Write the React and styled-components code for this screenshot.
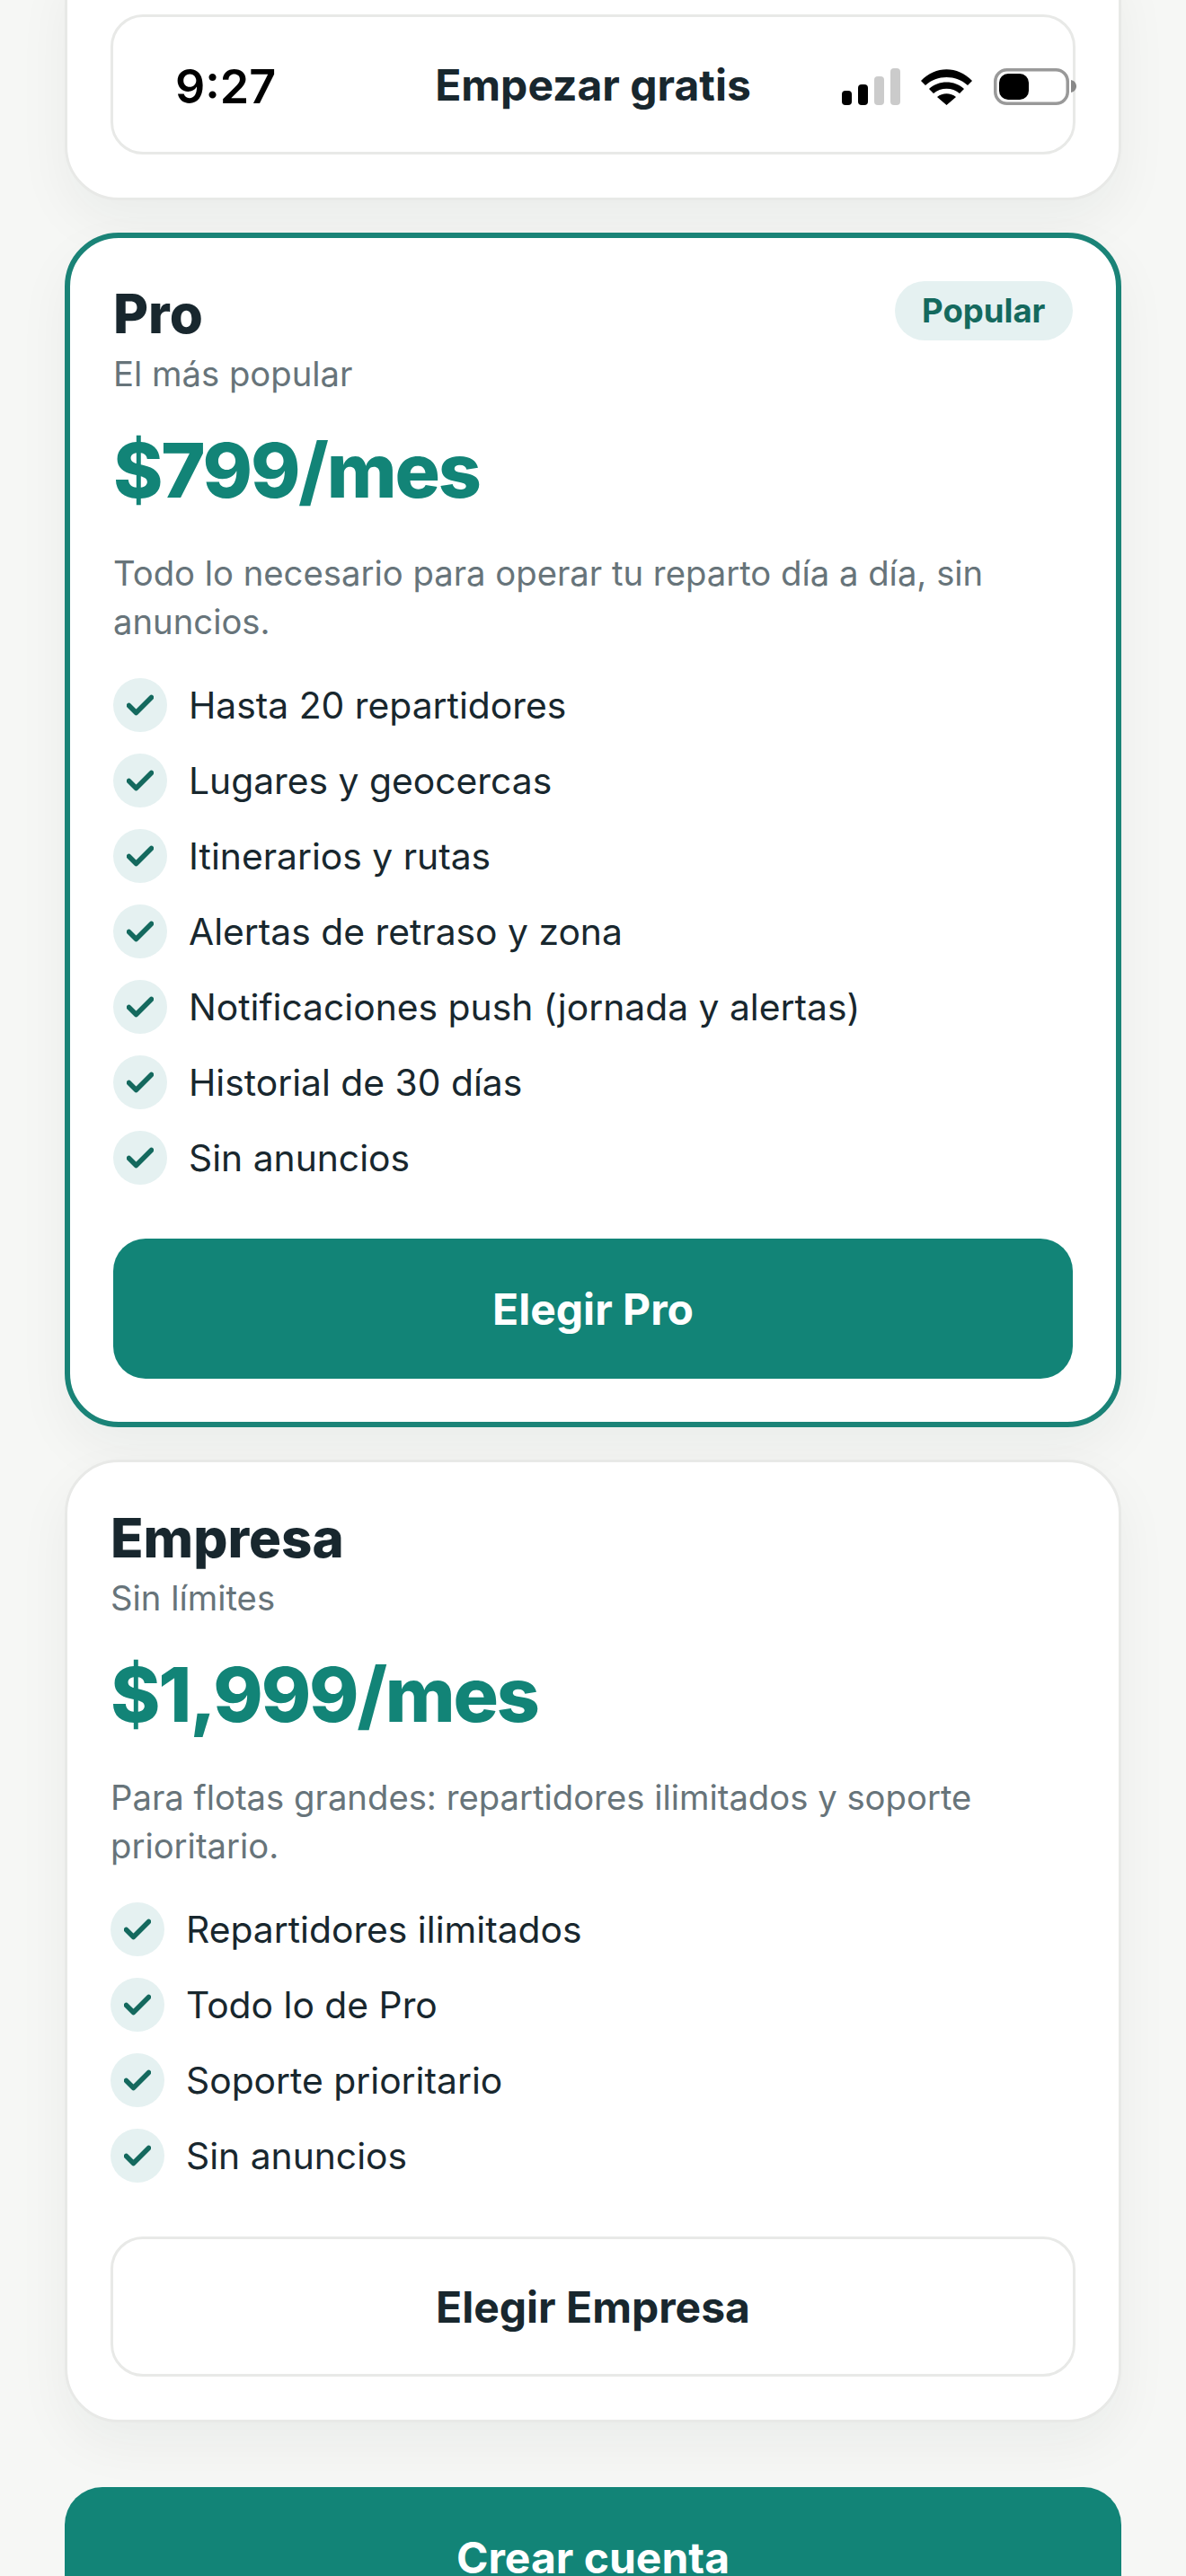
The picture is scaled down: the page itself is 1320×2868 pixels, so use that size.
import React from "react";
import styled, { createGlobalStyle } from "styled-components";

const Global = createGlobalStyle`
  html, body { margin: 0; padding: 0; background: #f6f7f5; }
  * { box-sizing: border-box; }
  #root { font-family: Inter, "Liberation Sans", sans-serif; }
`;

const Page = styled.div`
  position: relative;
  width: 1320px;
  height: 2868px;
  overflow: hidden;
  padding: 0 72px;
  display: flex;
  flex-direction: column;
  gap: 36px;
`;

const Card = styled.section`
  background: #fff;
  border: ${(p) => (p.$featured ? "6px solid #1a8377" : "3px solid #e8e9e7")};
  border-radius: 60px;
  padding: 48px;
  display: flex;
  flex-direction: column;
  box-shadow: 0 24px 60px rgba(24, 44, 44, 0.05);
`;

const CroppedCard = styled(Card)`
  margin-top: -60px;
  padding-top: 73px;
`;

const HeadRow = styled.div`
  display: flex;
  justify-content: space-between;
  align-items: flex-start;
`;

const PlanName = styled.h2`
  margin: 0;
  font-size: 60px;
  line-height: 72px;
  font-weight: 800;
  color: #18272e;
`;

const Sub = styled.div`
  margin-top: 7px;
  font-size: 38.25px;
  line-height: 48px;
  color: #67747a;
`;

const Pill = styled.span`
  height: 66px;
  padding: 0 30.5px;
  border-radius: 33px;
  background: #e5f1f1;
  color: #14695e;
  font-size: 36.5px;
  font-weight: 700;
  display: flex;
  align-items: center;
`;

const Price = styled.div`
  margin-top: 33px;
  font-size: 84px;
  line-height: 102px;
  font-weight: 800;
  letter-spacing: -2.2px;
  color: #128477;
`;

const Desc = styled.p`
  margin: 36px 0 0;
  font-size: 38.25px;
  line-height: 54px;
  color: #67747a;
`;

const Features = styled.ul`
  list-style: none;
  margin: 36px 0 0;
  padding: 0;
  display: flex;
  flex-direction: column;
  gap: 24px;
`;

const Feature = styled.li`
  display: flex;
  align-items: center;
  gap: 24px;
  height: 60px;
  font-size: 40.8px;
  color: #18272e;
`;

const CheckDot = styled.span`
  width: 60px;
  height: 60px;
  flex: none;
  border-radius: 50%;
  background: #e5f1f1;
  display: flex;
  align-items: center;
  justify-content: center;
`;

const Button = styled.button`
  width: 100%;
  height: 156px;
  margin-top: ${(p) => p.$mt || 0}px;
  border-radius: 36px;
  font-family: inherit;
  font-size: 48px;
  font-weight: 700;
  border: ${(p) => (p.$ghost ? "3px solid #e8e9e7" : "none")};
  background: ${(p) => (p.$ghost ? "#fff" : "#128477")};
  color: ${(p) => (p.$ghost ? "#18272e" : "#fff")};
`;

const Cta = styled(Button)`
  margin-top: 36px;
  flex: none;
  border-radius: 42px;
`;

const StatusBar = styled.div`
  position: absolute;
  top: 0;
  left: 0;
  width: 1320px;
  height: 190px;
  padding: 0 121px 0 195px;
  display: flex;
  align-items: center;
  justify-content: space-between;
`;

const Time = styled.span`
  margin-top: 2px;
  font-size: 52px;
  font-weight: 600;
  color: #000;
`;

const Check = () => (
  <svg width="30" height="24" viewBox="0 0 30 24" fill="none">
    <path d="M2.5 12.5 L10.5 20.5 L27.5 3.5" stroke="#14695e" strokeWidth="5.5" strokeLinecap="round" strokeLinejoin="round" />
  </svg>
);

const StatusIcons = () => (
  <svg width="262" height="44" viewBox="0 0 262 44">
    <g fill="#000">
      <rect x="0" y="28" width="11" height="16" rx="4" />
      <rect x="18" y="21" width="11" height="23" rx="4" />
    </g>
    <g fill="#cbcbcb">
      <rect x="36" y="12" width="11" height="32" rx="4" />
      <rect x="54" y="3" width="11" height="41" rx="4" />
    </g>
    <path
      d="M88 17 C104 0 129 0 145 17 L140 22 C127 10 106 10 93 22 Z M97 26 C107 16 126 16 136 26 L131 31 C123 24 110 24 102 31 Z M106 35 C112 30 121 30 127 35 L116.5 44 Z"
      fill="#000"
    />
    <rect x="170.75" y="4.75" width="80.5" height="37.5" rx="13" fill="none" stroke="#999" strokeWidth="3.5" />
    <rect x="175" y="9" width="33" height="29" rx="10" fill="#000" />
    <path d="M255 16 C259 17 261 20 261 23 C261 26 259 29 255 30 Z" fill="#888" />
  </svg>
);

const Plan = ({ name, sub, price, desc, items, featured, cta }) => (
  <Card $featured={featured}>
    <HeadRow>
      <div>
        <PlanName>{name}</PlanName>
        <Sub>{sub}</Sub>
      </div>
      {featured && <Pill>Popular</Pill>}
    </HeadRow>
    <Price>{price}</Price>
    <Desc>{desc}</Desc>
    <Features>
      {items.map((t) => (
        <Feature key={t}>
          <CheckDot><Check /></CheckDot>
          {t}
        </Feature>
      ))}
    </Features>
    <Button $mt={60} $ghost={!featured}>{cta}</Button>
  </Card>
);

export default function App() {
  return (
    <>
      <Global />
      <Page>
        <CroppedCard>
          <Button $ghost>Empezar gratis</Button>
        </CroppedCard>
        <Plan
          featured
          name="Pro"
          sub="El más popular"
          price="$799/mes"
          desc="Todo lo necesario para operar tu reparto día a día, sin anuncios."
          items={[
            "Hasta 20 repartidores",
            "Lugares y geocercas",
            "Itinerarios y rutas",
            "Alertas de retraso y zona",
            "Notificaciones push (jornada y alertas)",
            "Historial de 30 días",
            "Sin anuncios",
          ]}
          cta="Elegir Pro"
        />
        <Plan
          name="Empresa"
          sub="Sin límites"
          price="$1,999/mes"
          desc="Para flotas grandes: repartidores ilimitados y soporte prioritario."
          items={["Repartidores ilimitados", "Todo lo de Pro", "Soporte prioritario", "Sin anuncios"]}
          cta="Elegir Empresa"
        />
        <Cta>Crear cuenta</Cta>
        <StatusBar>
          <Time>9:27</Time>
          <StatusIcons />
        </StatusBar>
      </Page>
    </>
  );
}
